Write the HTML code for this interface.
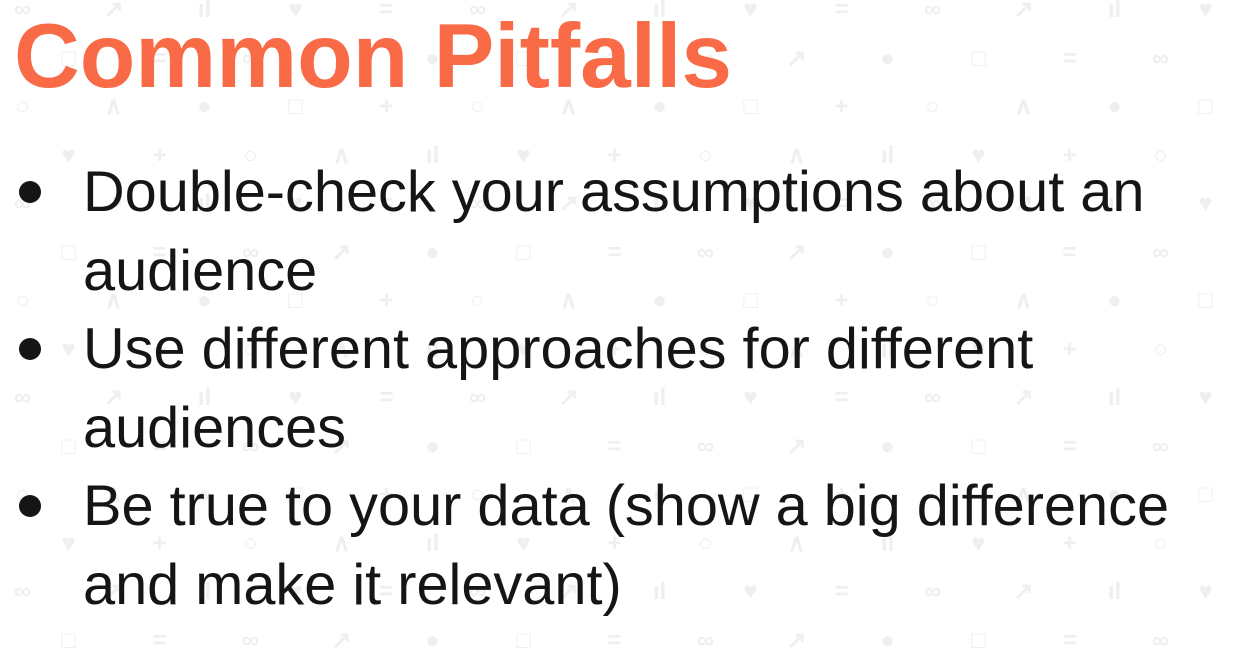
<!DOCTYPE html>
<html><head><style>
html,body{margin:0;padding:0}
body{width:1244px;height:632px;overflow:hidden;background:#fff;position:relative;font-family:"Liberation Sans",Arial,sans-serif}
.pat{position:absolute;left:0;top:-14px;width:1300px;color:#efefef;font-size:24px;font-weight:bold;overflow:hidden}
.r{height:48.5px;line-height:48.5px;white-space:nowrap}
.r span{display:inline-block;width:91px;text-align:center}
.o{margin-left:-23px}
.e{margin-left:23px}
h1{position:absolute;left:14px;top:-3px;margin:0;font-size:91px;font-weight:bold;color:#f96a47;line-height:120px}
.b{position:absolute;left:83px;top:153px;font-size:57.7px;line-height:78.5px;color:#151515}
.d{position:absolute;left:19px;width:22px;height:22px;border-radius:50%;background:#151515}
</style></head><body>
<div class="pat">
<div class="r o"><span>∞</span><span>↗</span><span>ıl</span><span>♥</span><span>=</span><span>∞</span><span>↗</span><span>ıl</span><span>♥</span><span>=</span><span>∞</span><span>↗</span><span>ıl</span><span>♥</span></div>
<div class="r e"><span>□</span><span>=</span><span>∞</span><span>↗</span><span>●</span><span>□</span><span>=</span><span>∞</span><span>↗</span><span>●</span><span>□</span><span>=</span><span>∞</span><span>↗</span></div>
<div class="r o"><span>○</span><span>∧</span><span>●</span><span>□</span><span>+</span><span>○</span><span>∧</span><span>●</span><span>□</span><span>+</span><span>○</span><span>∧</span><span>●</span><span>□</span></div>
<div class="r e"><span>♥</span><span>+</span><span>○</span><span>∧</span><span>ıl</span><span>♥</span><span>+</span><span>○</span><span>∧</span><span>ıl</span><span>♥</span><span>+</span><span>○</span><span>∧</span></div>
<div class="r o"><span>∞</span><span>↗</span><span>ıl</span><span>♥</span><span>=</span><span>∞</span><span>↗</span><span>ıl</span><span>♥</span><span>=</span><span>∞</span><span>↗</span><span>ıl</span><span>♥</span></div>
<div class="r e"><span>□</span><span>=</span><span>∞</span><span>↗</span><span>●</span><span>□</span><span>=</span><span>∞</span><span>↗</span><span>●</span><span>□</span><span>=</span><span>∞</span><span>↗</span></div>
<div class="r o"><span>○</span><span>∧</span><span>●</span><span>□</span><span>+</span><span>○</span><span>∧</span><span>●</span><span>□</span><span>+</span><span>○</span><span>∧</span><span>●</span><span>□</span></div>
<div class="r e"><span>♥</span><span>+</span><span>○</span><span>∧</span><span>ıl</span><span>♥</span><span>+</span><span>○</span><span>∧</span><span>ıl</span><span>♥</span><span>+</span><span>○</span><span>∧</span></div>
<div class="r o"><span>∞</span><span>↗</span><span>ıl</span><span>♥</span><span>=</span><span>∞</span><span>↗</span><span>ıl</span><span>♥</span><span>=</span><span>∞</span><span>↗</span><span>ıl</span><span>♥</span></div>
<div class="r e"><span>□</span><span>=</span><span>∞</span><span>↗</span><span>●</span><span>□</span><span>=</span><span>∞</span><span>↗</span><span>●</span><span>□</span><span>=</span><span>∞</span><span>↗</span></div>
<div class="r o"><span>○</span><span>∧</span><span>●</span><span>□</span><span>+</span><span>○</span><span>∧</span><span>●</span><span>□</span><span>+</span><span>○</span><span>∧</span><span>●</span><span>□</span></div>
<div class="r e"><span>♥</span><span>+</span><span>○</span><span>∧</span><span>ıl</span><span>♥</span><span>+</span><span>○</span><span>∧</span><span>ıl</span><span>♥</span><span>+</span><span>○</span><span>∧</span></div>
<div class="r o"><span>∞</span><span>↗</span><span>ıl</span><span>♥</span><span>=</span><span>∞</span><span>↗</span><span>ıl</span><span>♥</span><span>=</span><span>∞</span><span>↗</span><span>ıl</span><span>♥</span></div>
<div class="r e"><span>□</span><span>=</span><span>∞</span><span>↗</span><span>●</span><span>□</span><span>=</span><span>∞</span><span>↗</span><span>●</span><span>□</span><span>=</span><span>∞</span><span>↗</span></div>
</div>
<h1>Common Pitfalls</h1>
<div class="d" style="top:181px"></div>
<div class="d" style="top:338px"></div>
<div class="d" style="top:495px"></div>
<div class="b">Double-check your assumptions about an<br>audience<br>Use different approaches for different<br>audiences<br>Be true to your data (show a big difference<br>and make it relevant)</div>
</body></html>
